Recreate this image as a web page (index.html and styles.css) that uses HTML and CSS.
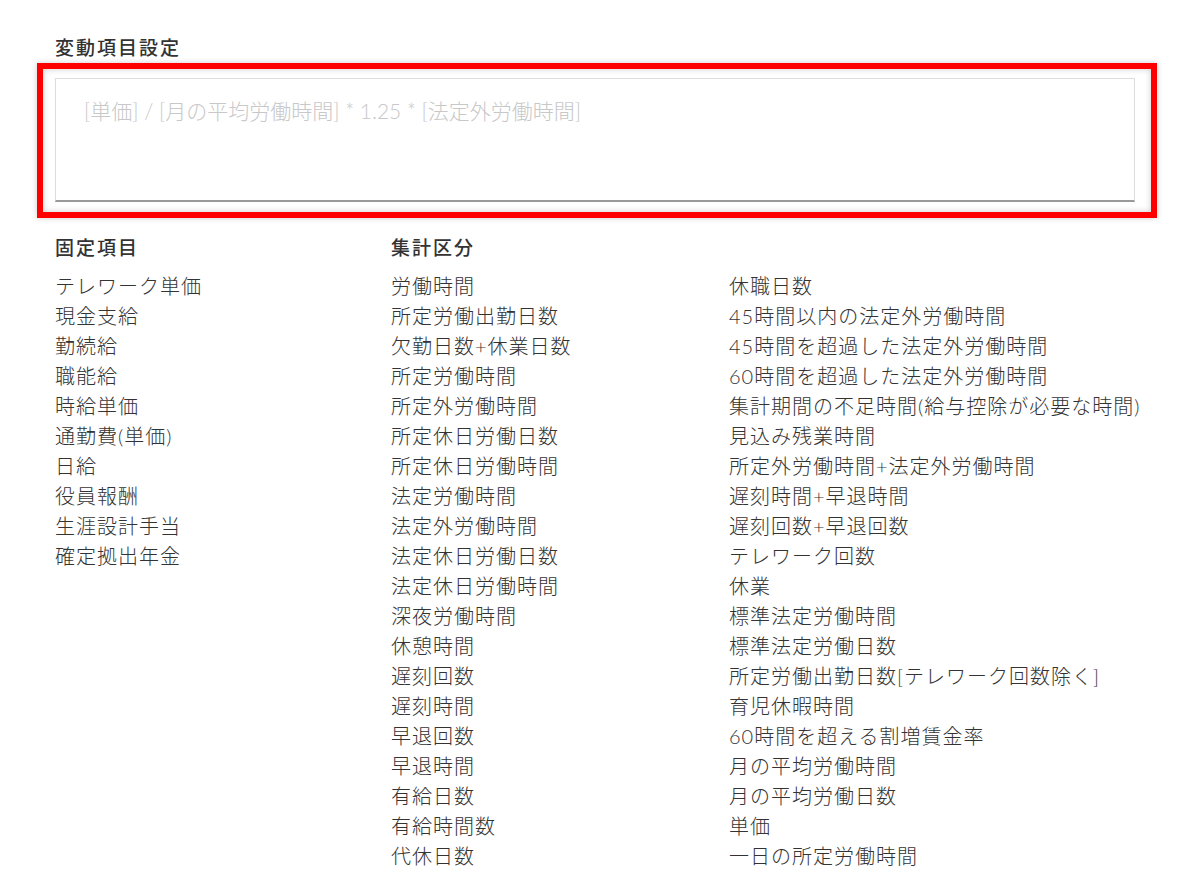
FILE: index.html
```html
<!DOCTYPE html>
<html lang="ja">
  <head>
    <meta charset="UTF-8" />
    <meta name="viewport" content="width=device-width, initial-scale=1.0" />
    <title>変動項目設定</title>
    <link rel="stylesheet" href="styles.css">
  </head>
  <body>
    <div class="page">
        <h3 class="title">変動項目設定</h3>
        <div class="highlight">
            <textarea class="formula" placeholder="[単価] / [月の平均労働時間] * 1.25 * [法定外労働時間]"></textarea>
        </div>

        <div class="fields">
            <div class="group fixed">
                <h4>固定項目</h4>
                <ul>
                    <li>テレワーク単価</li>
                    <li>現金支給</li>
                    <li>勤続給</li>
                    <li>職能給</li>
                    <li>時給単価</li>
                    <li>通勤費(単価)</li>
                    <li>日給</li>
                    <li>役員報酬</li>
                    <li>生涯設計手当</li>
                    <li>確定拠出年金</li>
                </ul>
            </div>
            <div class="group summary">
                <h4>集計区分</h4>
                <div class="summary-cols">
                    <ul>
                        <li>労働時間</li>
                        <li>所定労働出勤日数</li>
                        <li>欠勤日数+休業日数</li>
                        <li>所定労働時間</li>
                        <li>所定外労働時間</li>
                        <li>所定休日労働日数</li>
                        <li>所定休日労働時間</li>
                        <li>法定労働時間</li>
                        <li>法定外労働時間</li>
                        <li>法定休日労働日数</li>
                        <li>法定休日労働時間</li>
                        <li>深夜労働時間</li>
                        <li>休憩時間</li>
                        <li>遅刻回数</li>
                        <li>遅刻時間</li>
                        <li>早退回数</li>
                        <li>早退時間</li>
                        <li>有給日数</li>
                        <li>有給時間数</li>
                        <li>代休日数</li>
                    </ul>
                    <ul>
                        <li>休職日数</li>
                        <li>45時間以内の法定外労働時間</li>
                        <li>45時間を超過した法定外労働時間</li>
                        <li>60時間を超過した法定外労働時間</li>
                        <li>集計期間の不足時間(給与控除が必要な時間)</li>
                        <li>見込み残業時間</li>
                        <li>所定外労働時間+法定外労働時間</li>
                        <li>遅刻時間+早退時間</li>
                        <li>遅刻回数+早退回数</li>
                        <li>テレワーク回数</li>
                        <li>休業</li>
                        <li>標準法定労働時間</li>
                        <li>標準法定労働日数</li>
                        <li>所定労働出勤日数[テレワーク回数除く]</li>
                        <li>育児休暇時間</li>
                        <li>60時間を超える割増賃金率</li>
                        <li>月の平均労働時間</li>
                        <li>月の平均労働日数</li>
                        <li>単価</li>
                        <li>一日の所定労働時間</li>
                    </ul>
                </div>
            </div>
        </div>
    </div>
  </body>
</html>
```

FILE: styles.css
```css
body {
    margin: 0;
    background: #fff;
    color: #333;
    font-family: "Lato", "Noto Sans CJK JP", sans-serif;
    font-weight: 300;
}
.page {
    padding: 33px 55px 0;
}
.title {
    margin: 0;
    font-size: 19px;
    line-height: 30px;
    font-weight: 500;
    letter-spacing: 2px;
}
.highlight {
    margin: 0 -22px 0 -18px;
    padding: 9px 16px 10px 12px;
    border: 6px solid #ff0000;
    box-shadow: 0 0 6px rgba(0, 0, 0, 0.2), inset 0 0 6px rgba(0, 0, 0, 0.2);
    background: #fff;
}
.formula {
    display: block;
    box-sizing: border-box;
    width: 100%;
    height: 124px;
    margin: 0;
    padding: 17px 28px;
    border: 1px solid #ddd;
    border-bottom: 2px solid #999;
    outline: none;
    resize: none;
    font-family: inherit;
    font-weight: 300;
    font-size: 21px;
    line-height: 30px;
    color: #333;
    background: #fff;
}
.formula::placeholder {
    color: #c8c8c8;
}
.fields {
    display: flex;
    margin-top: 15px;
}
.group h4 {
    margin: 0 0 8px;
    font-size: 19px;
    line-height: 30px;
    font-weight: 500;
    letter-spacing: 2px;
}
.fixed {
    width: 336px;
}
.summary-cols {
    display: flex;
}
.summary-cols ul {
    width: 338px;
}
ul {
    margin: 0;
    padding: 0;
    list-style: none;
}
li {
    font-size: 20px;
    line-height: 30px;
    letter-spacing: 1px;
    white-space: nowrap;
}
```
